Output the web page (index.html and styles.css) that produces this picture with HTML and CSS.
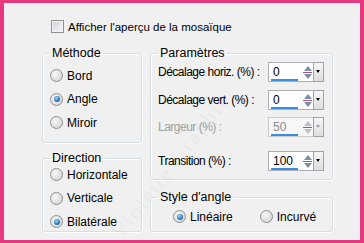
FILE: index.html
```html
<!DOCTYPE html>
<html lang="fr">
<head>
<meta charset="utf-8">
<link rel="stylesheet" href="styles.css">
</head>
<body>
<div class="frame">
  <div class="check-row">
    <span class="checkbox"></span>
    <span class="label">Afficher l'aperçu de la mosaïque</span>
  </div>
  <div class="cols">
    <div class="col left">
      <fieldset class="group methode">
        <legend>Méthode</legend>
        <div class="radio-list">
          <div class="radio-row"><span class="radio"></span><span>Bord</span></div>
          <div class="radio-row"><span class="radio on"></span><span>Angle</span></div>
          <div class="radio-row"><span class="radio"></span><span>Miroir</span></div>
        </div>
      </fieldset>
      <fieldset class="group direction">
        <legend>Direction</legend>
        <div class="radio-list">
          <div class="radio-row"><span class="radio"></span><span>Horizontale</span></div>
          <div class="radio-row"><span class="radio"></span><span>Verticale</span></div>
          <div class="radio-row"><span class="radio on"></span><span>Bilatérale</span></div>
        </div>
      </fieldset>
    </div>
    <div class="col right">
      <fieldset class="group params">
        <legend>Paramètres</legend>
        <div class="param-list">
          <div class="param-row">
            <span class="plabel">Décalage horiz. (%) :</span>
            <div class="spin"><div class="field"><span class="val">0</span><span class="bar" style="width:27px"></span><span class="arrows"><span class="up"></span><span class="mid"></span><span class="down"></span></span></div><span class="drop"></span></div>
          </div>
          <div class="param-row">
            <span class="plabel">Décalage vert. (%) :</span>
            <div class="spin"><div class="field"><span class="val">0</span><span class="bar" style="width:27px"></span><span class="arrows"><span class="up"></span><span class="mid"></span><span class="down"></span></span></div><span class="drop"></span></div>
          </div>
          <div class="param-row disabled">
            <span class="plabel">Largeur (%) :</span>
            <div class="spin"><div class="field"><span class="val">50</span><span class="bar" style="width:27px"></span><span class="arrows"><span class="up"></span><span class="mid"></span><span class="down"></span></span></div><span class="drop"></span></div>
          </div>
          <div class="param-row transition">
            <span class="plabel">Transition (%) :</span>
            <div class="spin"><div class="field"><span class="val">100</span><span class="bar" style="width:27px"></span><span class="arrows"><span class="up"></span><span class="mid"></span><span class="down"></span></span></div><span class="drop"></span></div>
          </div>
        </div>
      </fieldset>
      <fieldset class="group style">
        <legend>Style d'angle</legend>
        <div class="style-row">
          <div class="radio-row"><span class="radio on"></span><span>Linéaire</span></div>
          <div class="radio-row"><span class="radio"></span><span>Incurvé</span></div>
        </div>
      </fieldset>
    </div>
  </div>
  <div class="watermark">Violette Graphic</div>
</div>
</body>
</html>
```

FILE: styles.css
```css
html, body {
  margin: 0;
  padding: 0;
  background: #e6397f;
}
.frame {
  position: relative;
  width: 364px;
  height: 243px;
  box-sizing: border-box;
  border: solid #e6397f;
  border-width: 3px 4px 3px 4px;
  background: #f0f0f0;
  padding: 17px 0 0 38px;
  font-family: "Liberation Sans", Arial, sans-serif;
  font-size: 12px;
  color: #000;
  overflow: hidden;
}
.check-row {
  display: flex;
  align-items: center;
  gap: 4px;
  margin-left: 9px;
  height: 13px;
}
.check-row .label {
  font-size: 11.5px;
}
.checkbox {
  width: 11px;
  height: 11px;
  border: 1px solid #8e8f8f;
  background: linear-gradient(135deg, #cbcfd5 0%, #e7e9ec 60%, #f4f4f4 100%);
  box-shadow: inset 0 0 0 1px #f4f4f4;
}
.cols {
  display: flex;
  gap: 8px;
  margin-top: 13px;
}
.col {
  display: flex;
  flex-direction: column;
}
.left { width: 100px; gap: 8px; }
.right { width: 183px; gap: 10px; }
.group {
  margin: 0;
  padding: 0 0 0 7px;
  min-width: 0;
  box-sizing: border-box;
  border: 1px solid #d5dfe5;
  border-radius: 3px;
  box-shadow: inset 1px 1px 0 #fff, 1px 1px 0 #fff;
}
.group legend {
  padding: 0 2px;
  margin-left: 0;
  line-height: 14px;
  font-size: 12.5px;
}
.methode { height: 97px; }
.direction { height: 81px; }
.params { height: 134px; }
.style { height: 42px; }
.radio-list {
  display: flex;
  flex-direction: column;
  gap: 10.5px;
  padding-top: 9px;
}
.direction .radio-list { padding-top: 3px; }
.radio-row {
  display: flex;
  align-items: center;
  gap: 4px;
  height: 13px;
  font-size: 12px;
}
.radio {
  width: 11px;
  height: 11px;
  border-radius: 50%;
  border: 1px solid #8e8f8f;
  background: radial-gradient(circle at 35% 35%, #f6f6f6 0%, #dcdcdc 70%, #cfcfcf 100%);
  box-sizing: content-box;
  position: relative;
}
.radio.on::after {
  content: "";
  position: absolute;
  left: 2.5px;
  top: 2.5px;
  width: 6px;
  height: 6px;
  border-radius: 50%;
  background: radial-gradient(circle at 40% 35%, #9fd8f5 0%, #2e7fbf 55%, #173f6e 100%);
}
.param-list {
  display: flex;
  flex-direction: column;
  gap: 7.5px;
  padding-top: 2px;
}
.param-row {
  display: flex;
  align-items: center;
  justify-content: space-between;
  height: 20px;
  padding-right: 8px;
  font-size: 12px;
}
.plabel {
  letter-spacing: -0.5px;
  white-space: nowrap;
}
.param-row.transition { margin-top: 6px; }
.disabled .plabel { color: #a0a0a0; }
.spin {
  display: flex;
  height: 20px;
}
.field {
  position: relative;
  width: 44px;
  height: 18px;
  border: 1px solid #abadb3;
  border-right: none;
  background: #fff;
}
.disabled .field { background: #f7f7f7; border-color: #c9cacd; }
.val {
  position: absolute;
  left: 4px;
  top: 3px;
  line-height: 13px;
}
.disabled .val { color: #8a8a8a; }
.bar {
  position: absolute;
  left: 2px;
  bottom: 0;
  height: 2px;
  background: #3a8ee0;
}
.arrows {
  position: absolute;
  right: 1px;
  top: 3px;
  width: 9px;
  height: 13px;
  display: flex;
  flex-direction: column;
  align-items: center;
}
.up, .down {
  width: 0;
  height: 0;
  border-left: 4px solid transparent;
  border-right: 4px solid transparent;
}
.up { border-bottom: 5px solid #7a8fa8; }
.down { border-top: 5px solid #7a8fa8; }
.mid {
  width: 9px;
  height: 1px;
  margin: 1px 0;
  background: #b14a84;
}
.disabled .up { border-bottom-color: #b8c0c8; }
.disabled .down { border-top-color: #b8c0c8; }
.drop {
  position: relative;
  width: 9px;
  height: 18px;
  border: 1px solid #9ea3a9;
  background: linear-gradient(#f6f6f6, #dedede);
}
.drop::after {
  content: "";
  position: absolute;
  left: 2px;
  top: 7px;
  border-left: 2.5px solid transparent;
  border-right: 2.5px solid transparent;
  border-top: 3px solid #000;
}
.disabled .drop::after { border-top-color: #a0a0a0; }
.style-row {
  display: flex;
  gap: 27px;
  padding: 6px 0 0 15px;
}
.watermark {
  position: absolute;
  left: 78px;
  top: 150px;
  transform: rotate(-52deg);
  font-size: 22px;
  font-family: "Liberation Serif", serif;
  color: rgba(0, 0, 0, 0.05);
  letter-spacing: 2px;
  white-space: nowrap;
}
```
